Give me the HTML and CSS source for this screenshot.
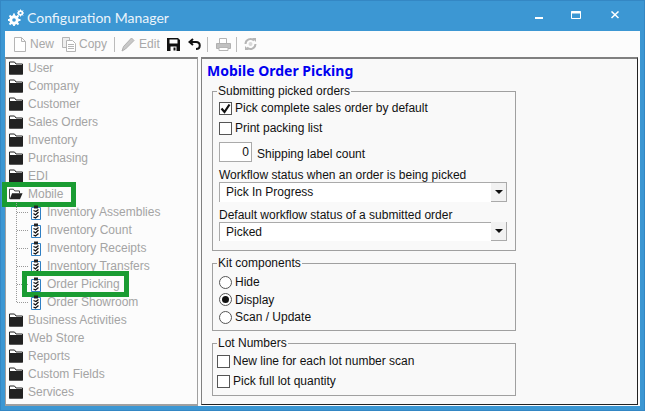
FILE: index.html
```html
<!DOCTYPE html>
<html lang="en">
<head>
    <meta charset="UTF-8">
    <title>Configuration Manager</title>
    <link rel="stylesheet" href="styles.css">
</head>
<body>
    <svg class="defs" width="0" height="0">
        <symbol id="folder" viewBox="0 0 14 14">
            <path d="M.5 13V1h5l1.500 2h6.500v10z" fill="#fff" stroke="#222"/>
            <path d="M0 4h14v9.500h-14z" fill="#222"/>
        </symbol>
        <symbol id="folder-open" viewBox="0 0 16 14">
            <path d="M.5 12.500V1.500h4.500l1.500 2h5.500v2.500" fill="#fff" stroke="#222"/>
            <path d="M.8 13 3.500 6h12l-3 7z" fill="#222"/>
        </symbol>
        <symbol id="task" viewBox="0 0 10 15">
            <path d="M.5 2.500h9v12h-9z" fill="#fff" stroke="#2f7fc4"/>
            <path d="M3 .5h4v3h-4z" fill="#222"/>
            <path d="M2.500 5.500 5 6.500 7.500 4.500M2.500 8.500 4.500 10 7.500 7M2.500 12 4.500 13 7.500 10.500" fill="none" stroke="#111" stroke-width="1.300"/>
        </symbol>
    </svg>

    <div class="titlebar">
        <svg class="app-icon" width="16" height="17" viewBox="0 0 16 17">
            <circle cx="6" cy="11" r="3.600" fill="none" stroke="#fff" stroke-width="2.400"/>
            <path d="M6 4.500v13M-.5 11h13M1.500 6.500l9 9M10.500 6.500l-9 9" stroke="#fff" stroke-width="1.800"/>
            <circle cx="6" cy="11" r="1.800" fill="#3c97d3"/>
            <circle cx="12.500" cy="4" r="2" fill="none" stroke="#fff" stroke-width="1.600"/>
            <path d="M12.500 .5v7M9 4h7M10 1.500l5 5M15 1.500l-5 5" stroke="#fff"/>
            <circle cx="12.500" cy="4" r="1" fill="#3c97d3"/>
        </svg>
        <span class="title">Configuration Manager</span>
        <div class="window-buttons">
            <svg class="min-btn" width="10" height="8" viewBox="0 0 10 8"><path d="M1 7h8" stroke="#fff" stroke-width="2"/></svg>
            <svg width="10" height="8" viewBox="0 0 10 8"><path d="M.5 .5h9v7h-9z" fill="none" stroke="#fff"/><path d="M0 1.500h10" stroke="#fff" stroke-width="2"/></svg>
            <svg width="10" height="8" viewBox="0 0 10 8"><path d="M1.500 .5l7 6.500M8.500 .5l-7 6.500" stroke="#fff" stroke-width="1.500"/></svg>
        </div>
    </div>

    <div class="client">
        <div class="toolbar">
            <button class="tool tool-new">
                <svg width="12" height="15" viewBox="0 0 12 15"><path d="M.5 .5h7l4 4v10h-11z M7.500 .5v4h4" fill="#fff" stroke="#b5b5b5"/></svg>
                New
            </button>
            <button class="tool tool-copy">
                <svg width="14" height="15" viewBox="0 0 14 15"><path d="M.5 .5h7v10h-7z" fill="#eee" stroke="#b5b5b5"/><path d="M4.500 3.500h6l3 3v8h-9z" fill="#fff" stroke="#b5b5b5"/><path d="M6 7.500h6M6 9.500h6M6 11.500h6" stroke="#b5b5b5"/></svg>
                Copy
            </button>
            <span class="sep sep-edit"></span>
            <button class="tool tool-edit">
                <svg width="14" height="15" viewBox="0 0 14 15"><path d="M10.500 1 13 3.500 4.500 12 1 14l1.500-4.500z" fill="#c8c8c8" stroke="#b0b0b0"/></svg>
                Edit
            </button>
            <svg class="tool-save" width="13" height="13" viewBox="0 0 13 13"><path d="M0 0h11l2 2v11h-13z" fill="#111"/><path d="M2.500 1.500h8v4h-8z" fill="#fff"/><path d="M3.500 8.500h6v4.500h-6z" fill="#fff"/><path d="M6.500 9.500h2v3h-2z" fill="#111"/></svg>
            <svg class="tool-undo" width="13" height="12" viewBox="0 0 13 12"><path d="M5 1 1.500 4 5 7" fill="none" stroke="#111" stroke-width="2"/><path d="M2 4h6c5 0 5 7 0 7" fill="none" stroke="#111" stroke-width="2"/></svg>
            <span class="sep sep-print"></span>
            <svg class="tool-print" width="15" height="13" viewBox="0 0 15 13"><path d="M3.500 .5h7v5h-7z" fill="#fff" stroke="#b5b5b5"/><path d="M.5 5.500h14v5h-14z" fill="#c0c0c0" stroke="#b0b0b0"/><path d="M3 9.500h9v3h-9z" fill="#fff" stroke="#b5b5b5"/></svg>
            <span class="sep sep-refresh"></span>
            <svg class="tool-refresh" width="13" height="14" viewBox="0 0 13 14"><path d="M1.500 7a5 5 0 0 1 8.500-3.500M11.500 7a5 5 0 0 1-8.500 3.500" fill="none" stroke="#b5b5b5" stroke-width="2"/><path d="M8 1h4v4zM5 13h-4v-4z" fill="#b5b5b5"/><circle cx="6.500" cy="7" r="2" fill="#d8d8d8"/></svg>
        </div>

        <div class="panes">
            <ul class="tree">
                <li class="node"><svg class="folder"><use href="#folder"/></svg>User</li>
                <li class="node"><svg class="folder"><use href="#folder"/></svg>Company</li>
                <li class="node"><svg class="folder"><use href="#folder"/></svg>Customer</li>
                <li class="node"><svg class="folder"><use href="#folder"/></svg>Sales Orders</li>
                <li class="node"><svg class="folder"><use href="#folder"/></svg>Inventory</li>
                <li class="node"><svg class="folder"><use href="#folder"/></svg>Purchasing</li>
                <li class="node"><svg class="folder"><use href="#folder"/></svg>EDI</li>
                <li class="node">
                    <svg class="folder"><use href="#folder-open"/></svg>Mobile
                    <span class="mark mark-mobile"></span>
                </li>
                <li>
                    <ul class="children">
                        <li class="node child"><svg class="task"><use href="#task"/></svg>Inventory Assemblies</li>
                        <li class="node child"><svg class="task"><use href="#task"/></svg>Inventory Count</li>
                        <li class="node child"><svg class="task"><use href="#task"/></svg>Inventory Receipts</li>
                        <li class="node child"><svg class="task"><use href="#task"/></svg>Inventory Transfers</li>
                        <li class="node child">
                            <svg class="task"><use href="#task"/></svg>Order Picking
                            <span class="mark mark-picking"></span>
                        </li>
                        <li class="node child"><svg class="task"><use href="#task"/></svg>Order Showroom</li>
                    </ul>
                </li>
                <li class="node"><svg class="folder"><use href="#folder"/></svg>Business Activities</li>
                <li class="node"><svg class="folder"><use href="#folder"/></svg>Web Store</li>
                <li class="node"><svg class="folder"><use href="#folder"/></svg>Reports</li>
                <li class="node"><svg class="folder"><use href="#folder"/></svg>Custom Fields</li>
                <li class="node"><svg class="folder"><use href="#folder"/></svg>Services</li>
            </ul>

            <div class="detail">
                <h1>Mobile Order Picking</h1>

                <fieldset class="group group-submit">
                    <legend>Submitting picked orders</legend>
                    <div class="check-row"><span class="box checked"><svg width="11" height="11" viewBox="0 0 11 11"><path d="M1.500 5.500 4.500 9 9.500 1.500" fill="none" stroke="#111" stroke-width="2.200"/></svg></span>Pick complete sales order by default</div>
                    <div class="check-row"><span class="box"></span>Print packing list</div>
                    <div class="count-row"><span class="spin">0</span><span class="count-label">Shipping label count</span></div>
                    <div class="field-label">Workflow status when an order is being picked</div>
                    <div class="combo"><span>Pick In Progress</span><span class="combo-btn"></span></div>
                    <div class="field-label">Default workflow status of a submitted order</div>
                    <div class="combo"><span>Picked</span><span class="combo-btn"></span></div>
                </fieldset>

                <fieldset class="group group-kit">
                    <legend>Kit components</legend>
                    <div class="radio-row"><span class="radio"></span>Hide</div>
                    <div class="radio-row"><span class="radio on"></span>Display</div>
                    <div class="radio-row"><span class="radio"></span>Scan / Update</div>
                </fieldset>

                <fieldset class="group group-lot">
                    <legend>Lot Numbers</legend>
                    <div class="check-row"><span class="box"></span>New line for each lot number scan</div>
                    <div class="check-row"><span class="box"></span>Pick full lot quantity</div>
                </fieldset>
            </div>
        </div>
    </div>
</body>
</html>
```

FILE: styles.css
```css
* {
    box-sizing: border-box;
}
html, body {
    height: 100%;
}
body {
    margin: 0;
    overflow: hidden;
    background-color: #3c97d3;
    box-shadow: inset 0 0 0 1px #3487c4;
    font-family: "Liberation Sans", Arial, sans-serif;
    font-size: 12px;
    color: #111;
}
.defs {
    display: block;
    height: 0;
}

/* Window frame */
.titlebar {
    display: flex;
    align-items: center;
    height: 31px;
    padding: 3px 0 0 8px;
    color: #eaf4fb;
}
.app-icon {
    margin-right: 3px;
}
.title {
    font-family: Lato, Arial, sans-serif;
    font-size: 14px;
}
.window-buttons {
    display: flex;
    gap: 29px;
    margin-left: auto;
    margin-right: 25px;
    margin-top: -4px;
}
.min-btn {
    margin-right: -2px;
}
.client {
    height: 375px;
    margin: 0 5px;
    background-color: #fcfcfc;
}

/* Toolbar */
.toolbar {
    display: flex;
    align-items: center;
    height: 26px;
    padding-left: 9px;
    color: #a8a8a8;
}
.tool {
    display: flex;
    align-items: center;
    gap: 4px;
    padding: 0;
    border: none;
    background: none;
    font: inherit;
    color: inherit;
}
.tool-copy {
    gap: 3px;
    margin-left: 8px;
}
.sep {
    width: 1px;
    height: 15px;
    background-color: #bbb;
}
.sep-edit {
    margin: 0 6px 0 7px;
}
.tool-save {
    margin-left: 7px;
}
.tool-undo {
    margin-left: 8px;
}
.sep-print {
    margin: 0 8px 0 6px;
}
.tool-print {
    margin-right: 5px;
}
.sep-refresh {
    margin-right: 7px;
}

/* Tree */
.panes {
    display: flex;
    gap: 3px;
    height: 349px;
}
.tree {
    width: 193px;
    margin: 0;
    padding: 0;
    list-style: none;
    border: 1px solid #a0a0a0;
    border-top: 2px solid #808080;
    border-bottom-width: 2px;
    background-color: #fcfcfc;
}
.node {
    position: relative;
    display: flex;
    align-items: center;
    height: 18px;
    padding-left: 3px;
    color: #a4a4a4;
}
.folder {
    width: 14px;
    height: 14px;
    margin-right: 5px;
}
.children {
    position: relative;
    margin: 0 0 0 10px;
    padding: 0;
    list-style: none;
}
.children::before {
    content: "";
    position: absolute;
    left: 0;
    top: 0;
    bottom: 9px;
    border-left: 1px dotted #999;
}
.child {
    padding-left: 15px;
}
.child::before {
    content: "";
    position: absolute;
    left: 1px;
    top: 9px;
    width: 11px;
    border-top: 1px dotted #999;
}
.task {
    width: 10px;
    height: 15px;
    margin-right: 6px;
}
/* green highlight boxes over the tree */
.mark {
    position: absolute;
    border: 5px solid #1a9c32;
}
.mark-mobile {
    left: -4px;
    top: -3px;
    width: 74px;
    height: 25px;
}
.mark-picking {
    left: 6px;
    top: -4px;
    width: 107px;
    height: 26px;
}

/* Detail pane */
.detail {
    width: 437px;
    height: 348px;
    padding: 2px 0 0 5px;
    border: 1px solid #222;
    border-top: 2px solid #808080;
    border-left: 1px solid #808080;
    background-color: #f9f9f9;
}
h1 {
    margin: 0;
    font-family: "Noto Sans", Arial, sans-serif;
    font-size: 14px;
    line-height: 20px;
    font-weight: bold;
    color: #0000f0;
}
.group {
    width: 304px;
    margin: 3px 0 0 5px;
    padding: 0 0 0 6px;
    border: 1px solid #a0a0a0;
}
.group legend {
    margin-left: -2px;
    padding: 0 1px;
    line-height: 14px;
}
.group-submit {
    height: 167px;
}
.group-kit {
    height: 75px;
    margin-top: 5px;
    padding-top: 3.500px;
}
.group-lot {
    height: 60px;
    margin-top: 5px;
    padding-top: 1px;
    padding-left: 4px;
}
.group-lot legend {
    margin-left: 0;
}
.check-row {
    display: flex;
    align-items: center;
    gap: 3px;
    height: 20px;
}
.box {
    display: flex;
    align-items: center;
    justify-content: center;
    width: 13px;
    height: 13px;
    border: 1px solid #555;
    background-color: #fff;
}
.count-row {
    display: flex;
    align-items: center;
    gap: 5px;
    height: 20px;
    margin-top: 4px;
}
.count-label {
    padding-top: 4px;
}
.spin {
    width: 33px;
    height: 20px;
    padding-right: 2px;
    border: 1px solid #aaa;
    background-color: #fff;
    text-align: right;
    line-height: 18px;
}
.field-label {
    height: 20px;
    line-height: 26px;
}
.combo {
    display: flex;
    align-items: center;
    justify-content: space-between;
    width: 288px;
    height: 19.500px;
    padding-left: 6px;
    border-top: 1px solid #aaa;
    border-left: 1px solid #aaa;
    background-color: #fff;
}
.combo-btn {
    position: relative;
    width: 16px;
    height: 19px;
    border-right: 1px solid #aaa;
    border-bottom: 1px solid #aaa;
    background-color: #f2f2f2;
}
.combo-btn::after {
    content: "";
    position: absolute;
    left: 4px;
    top: 7px;
    border: 4px solid transparent;
    border-top: 4px solid #111;
    border-bottom: none;
}
.radio-row {
    display: flex;
    align-items: center;
    gap: 3px;
    height: 17.500px;
}
.radio {
    position: relative;
    width: 13px;
    height: 13px;
    border: 1px solid #555;
    border-radius: 50%;
    background-color: #fff;
}
.radio.on::after {
    content: "";
    position: absolute;
    left: 2px;
    top: 2px;
    width: 7px;
    height: 7px;
    border-radius: 50%;
    background-color: #111;
}
```
